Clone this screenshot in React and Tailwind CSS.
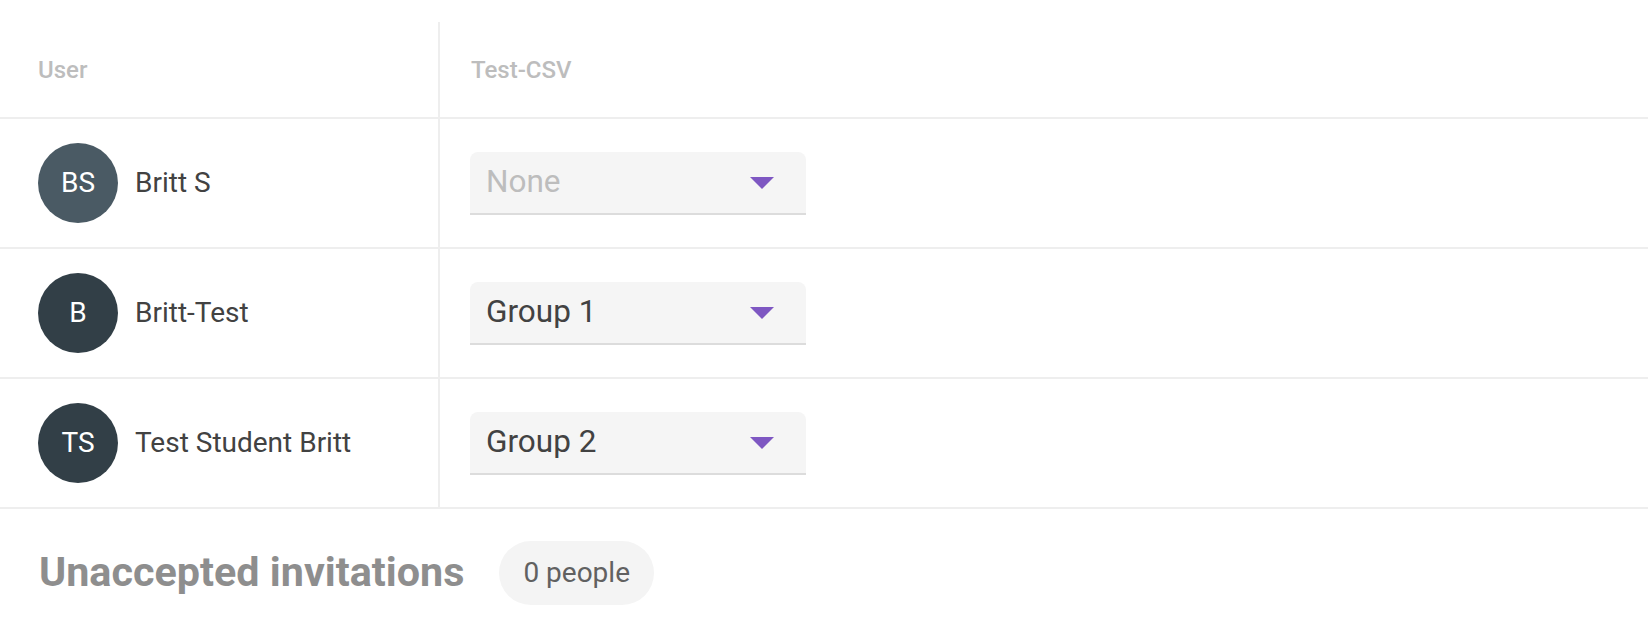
import React from "react";

const users = [
  { initials: "BS", name: "Britt S", group: "None", placeholder: true, color: "bg-[#4a5a64]" },
  { initials: "B", name: "Britt-Test", group: "Group 1", placeholder: false, color: "bg-[#323f47]" },
  { initials: "TS", name: "Test Student Britt", group: "Group 2", placeholder: false, color: "bg-[#323f47]" },
];

function Select({ value, placeholder }) {
  return (
    <div className="w-[336px] h-[63px] bg-[#f5f5f5] rounded-t-lg border-b-2 border-[#dcdcdc] flex items-center pl-[16px] pr-[32px]">
      <span className={`flex-1 text-[31.5px] leading-none ${placeholder ? "text-[#bdbdbd]" : "text-[#424242]"}`}>{value}</span>
      <svg width="24" height="12" viewBox="0 0 24 12" className="mt-[2px]">
        <polygon points="0,0 24,0 12,12" fill="#7e57c2" />
      </svg>
    </div>
  );
}

export default function App() {
  return (
    <div className="w-[1648px] h-[630px] bg-white overflow-hidden pt-[22px]" style={{ fontFamily: "Roboto, 'Liberation Sans', sans-serif" }}>
      <div className="flex flex-col">
        <div className="flex h-[97px] border-b-2 border-[#eeeeee]">
          <div className="w-[440px] shrink-0 border-r-2 border-[#eeeeee] flex items-center pl-[38px] text-[24px] font-medium text-[#bdbdbd]">User</div>
          <div className="flex items-center pl-[31px] text-[24px] font-medium text-[#bdbdbd]">Test-CSV</div>
        </div>
        {users.map((u) => (
          <div key={u.name} className="flex h-[130px] border-b-2 border-[#eeeeee]">
            <div className="w-[440px] shrink-0 border-r-2 border-[#eeeeee] flex items-center pl-[38px]">
              <div className={`w-[80px] h-[80px] rounded-full ${u.color} flex items-center justify-center text-white text-[28px]`}>{u.initials}</div>
              <span className="ml-[17px] text-[28px] text-[#424242]">{u.name}</span>
            </div>
            <div className="flex items-center pl-[30px]">
              <Select value={u.group} placeholder={u.placeholder} />
            </div>
          </div>
        ))}
        <div className="flex items-center pl-[39px] pt-[32px]">
          <span className="text-[41.3px] font-bold text-[#8e8e8e]">Unaccepted invitations</span>
          <div className="ml-[35px] h-[64px] px-[24px] rounded-full bg-[#f4f4f4] flex items-center text-[28px] text-[#616161]">0 people</div>
        </div>
      </div>
    </div>
  );
}
